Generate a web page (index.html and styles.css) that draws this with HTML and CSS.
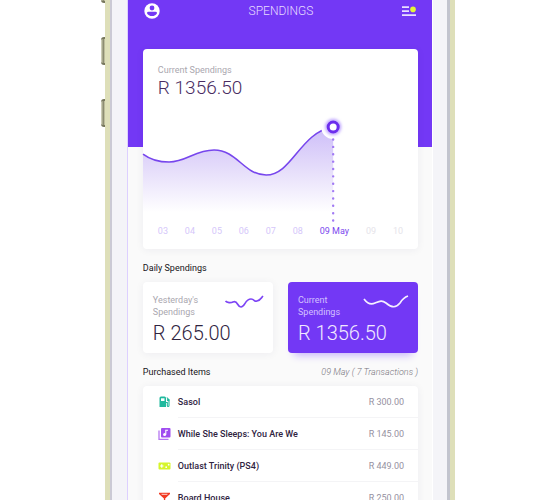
FILE: index.html
```html
<!DOCTYPE html>
<html lang="en">
<head>
<meta charset="utf-8">
<meta name="viewport" content="width=device-width, initial-scale=1">
<title>Spendings</title>
<link rel="stylesheet" href="styles.css">
</head>
<body>
<div class="phone">
  <div class="side-buttons" aria-hidden="true"><i></i><i></i><i></i></div>
  <div class="screen">
    <header class="topbar">
      <button class="icon-button" aria-label="Account">
        <svg width="16" height="16" viewBox="0 0 16 16"><circle cx="8" cy="8" r="7.7" fill="#fff"/><circle cx="8" cy="5" r="2.4" fill="#7338f5"/><path d="M3 10.2Q3 8.8 4.6 8.8H11.4Q13 8.8 13 10.2Q11.500 13 8 13Q4.500 13 3 10.200Z" fill="#7338f5"/></svg>
      </button>
      <h1>SPENDINGS</h1>
      <button class="icon-button" aria-label="Menu">
        <svg width="14" height="12" viewBox="0 0 14 12"><path d="M0 2.200H7M0 6.200H7M0 10.200H14" stroke="#e9dfff" stroke-width="1.700"/><circle cx="11" cy="4.400" r="2.800" fill="#e3f536"/></svg>
      </button>
    </header>
    <main>
      <section class="card chart-card">
        <p class="label">Current Spendings</p>
        <p class="total">R 1356.50</p>
        <svg class="chart" viewBox="0 0 275 112" role="img" aria-label="Spendings by day">
          <defs><linearGradient id="fade" x1="0" y1="17" x2="0" y2="102" gradientUnits="userSpaceOnUse"><stop offset="0" stop-color="#cdbdf9"/><stop offset=".45" stop-color="#e3dafa"/><stop offset="1" stop-color="#fff"/></linearGradient>
          <filter id="glow" x="-50%" y="-50%" width="200%" height="200%"><feGaussianBlur stdDeviation="1.500"/></filter></defs>
          <path d="M0 44C8 50 17 52 26 52C43 52 52 40 71 40C94 40 101 65 123 65C149 65 157 22 190 17V104H0Z" fill="url(#fade)"/>
          <path d="M0 44C8 50 17 52 26 52C43 52 52 40 71 40C94 40 101 65 123 65C149 65 157 22 190 17" fill="none" stroke="#7746ed" stroke-width="1.600"/>
          <circle cx="190" cy="17" r="12" fill="#fff"/>
          <circle cx="190" cy="17" r="6.500" fill="none" stroke="#b99dff" stroke-width="3" filter="url(#glow)"/>
          <circle cx="190" cy="17" r="5" fill="#fff" stroke="#6c2eed" stroke-width="3"/>
          <path d="M190 29.500V114" stroke="#a27bf4" stroke-width="2.400" stroke-linecap="round" stroke-dasharray="0.010 7.350"/>
        </svg>
        <ol class="days">
          <li>03</li><li>04</li><li>05</li><li>06</li><li>07</li><li>08</li><li class="today">09 May</li><li class="future">09</li><li class="future">10</li>
        </ol>
      </section>
      <h2>Daily Spendings</h2>
      <div class="daily">
        <section class="card day-card">
          <div class="day-head"><p class="label">Yesterday's<br>Spendings</p>
            <svg width="40" height="14" viewBox="0 0 40 14"><path d="M1.500 6C3 8 7 8 9 7C14 5 13 12 17 12C21 12 21 4 27 4C31 4 29 7 33 6C37 5 37 3 39 1" fill="none" stroke="#7d45f5" stroke-width="1.700"/></svg></div>
          <p class="amount">R 265.00</p>
        </section>
        <section class="card day-card active">
          <div class="day-head"><p class="label">Current<br>Spendings</p>
            <svg width="46" height="14" viewBox="0 0 46 14"><path d="M1 4C4 8 8 10 12 8C17 6 19 5 23 8C29 13 33 13 37 8C40 3 42 2 45 1" fill="none" stroke="#f5efff" stroke-width="1.700"/></svg></div>
          <p class="amount">R 1356.50</p>
        </section>
      </div>
      <div class="list-head"><h2>Purchased Items</h2><p>09 May ( 7 Transactions )</p></div>
      <ul class="card items">
        <li><svg width="13" height="12" viewBox="0 0 13 12"><path d="M1.500 11V2Q1.500 .5 3 .5H6.500Q8 .5 8 2V11Z" fill="#20b99e"/><path d="M3 2.300H6.500V5H3Z" fill="#fff"/><path d="M8 6.500H9.300V9.500Q9.300 10.500 10.100 10.500Q11 10.500 11 9.500V4L8.800 1.500" fill="none" stroke="#20b99e" stroke-width="1.100"/><circle cx="10.200" cy="4" r="1.300" fill="#20b99e"/></svg><div><span>Sasol</span><b>R 300.00</b></div></li>
        <li><svg width="13" height="12" viewBox="0 0 13 12"><rect x="3" y="0" width="9.500" height="9.500" rx="1" fill="#a04df0"/><path d="M1 2.500V11.300H10.500" fill="none" stroke="#b677f2" stroke-width="1.300"/><path d="M7.800 6.500V2.300H10" fill="none" stroke="#fff" stroke-width="1.100"/><circle cx="6.600" cy="6.500" r="1.500" fill="#fff"/></svg><div><span>While She Sleeps: You Are We</span><b>R 145.00</b></div></li>
        <li><svg width="13" height="12" viewBox="0 0 13 12"><rect x=".5" y="2.500" width="12" height="7" rx="1" fill="#d6f52b"/><path d="M2 6H5.500M3.750 4.200V7.800" stroke="#fff" stroke-width="1.200"/><circle cx="8.200" cy="7.200" r=".9" fill="#fff"/><circle cx="10.700" cy="4.700" r=".9" fill="#fff"/></svg><div><span>Outlast Trinity (PS4)</span><b>R 449.00</b></div></li>
        <li><svg width="13" height="12" viewBox="0 0 13 12"><path d="M1 .7H12V2L7.200 6.500V10.200H10V11.500H3.200V10.200H5.900V6.500L1 2Z" fill="#f13a22"/><path d="M3.600 2.300H9.400" stroke="#fff" stroke-width=".8"/></svg><div><span>Board House</span><b>R 250.00</b></div></li>
      </ul>
    </main>
  </div>
</div>
</body>
</html>
```
FILE: styles.css
```css
*, *::before, *::after { box-sizing: border-box; }

body {
  margin: 0;
  height: 100vh;
  overflow: hidden;
  background: #fff;
  font-family: Roboto, "Liberation Sans", sans-serif;
  color: #30243f;
}

h1, h2, p, ul, ol { margin: 0; padding: 0; font-weight: 400; }
ul, ol { list-style: none; }
svg { display: block; flex: none; }

.phone {
  position: relative;
  width: 63%;
  min-width: 320px;
  min-height: 100vh;
  margin: 0 auto;
  left: 2px;
  display: flex;
  background: #f4f4f8;
  border: solid #dedfb9;
  border-width: 0 5px;
}

.phone::before,
.phone::after {
  content: "";
  flex: none;
  width: 18px;
  border-left: 2px solid #cbcad5;
  border-right: 1px solid #ddd0ff;
}

.phone::after {
  border-left: 1px solid #fff;
  border-right: 3px solid #c2c4ce;
}

.side-buttons {
  position: absolute;
  left: -9px;
  top: -25px;
  display: grid;
  gap: 34px;
}

.side-buttons i {
  width: 4px;
  height: 28px;
  border: solid #77775d;
  border-width: 2px 0;
  border-radius: 3px 0 0 3px;
  background: linear-gradient(90deg, #dedec8, #88886c 60%, #d5d5b4);
}

.screen {
  flex: 1;
  min-width: 0;
  padding: 0 14px 0 15px;
  background: linear-gradient(#7338f5 147px, #fafafa 147px);
}

.topbar {
  display: flex;
  align-items: center;
  justify-content: space-between;
  height: 49px;
  padding: 0 2px 27px 1px;
}

h1 { font-size: 12px; line-height: 16px; font-weight: 300; color: #e6dcff; }

.icon-button { padding: 0; border: 0; background: none; }

.card {
  background: #fff;
  border-radius: 4px;
  box-shadow: 0 1px 8px rgba(40, 20, 90, .06);
}

.label { font-size: 9px; line-height: 12px; color: #aaa7af; }

.chart-card { height: 200px; padding-top: 15px; }
.chart-card .label, .total { padding-left: 15px; }
.total { font-size: 19px; line-height: 24px; font-weight: 300; color: #492d62; }
.chart { width: 100%; margin-top: 10px; overflow: visible; }

.days {
  display: flex;
  justify-content: space-between;
  padding: 3px 15px 0;
  font-size: 9px;
  line-height: 12px;
  color: #d5c7fa;
}

.today { color: #7b48ee; }
.future { color: #e6e4ea; }

h2 { font-size: 9px; line-height: 12px; color: #171420; }
main > h2 { margin: 13px 0 8px; }

.daily { display: grid; grid-template-columns: 1fr 1fr; gap: 15px; }
.day-card { height: 71px; padding: 12px 9px 0 10px; }
.day-head { display: flex; justify-content: space-between; }
.day-head svg { margin-top: 1px; }
.amount { font-size: 20px; line-height: 24px; margin-top: 3px; font-weight: 300; }

.active {
  background: #7338f5;
  color: #f1e9ff;
  box-shadow: 0 8px 8px -6px #c3aefb;
}

.active .label { color: #d3c1ff; }

.list-head { display: flex; justify-content: space-between; margin: 13px 0 8px; }
.list-head p { font-size: 9px; line-height: 12px; font-style: italic; font-weight: 300; color: #77747c; }

.items { padding-left: 15px; }
.items li { display: flex; align-items: center; gap: 7px; height: 32px; }
.items div {
  flex: 1;
  height: 32px;
  display: flex;
  align-items: center;
  justify-content: space-between;
  padding-right: 14px;
  border-bottom: 1px solid #f4f4f6;
  font-size: 9px;
}
.items span { font-weight: 500; }
.items b { font-weight: 400; color: #96919f; }
```
